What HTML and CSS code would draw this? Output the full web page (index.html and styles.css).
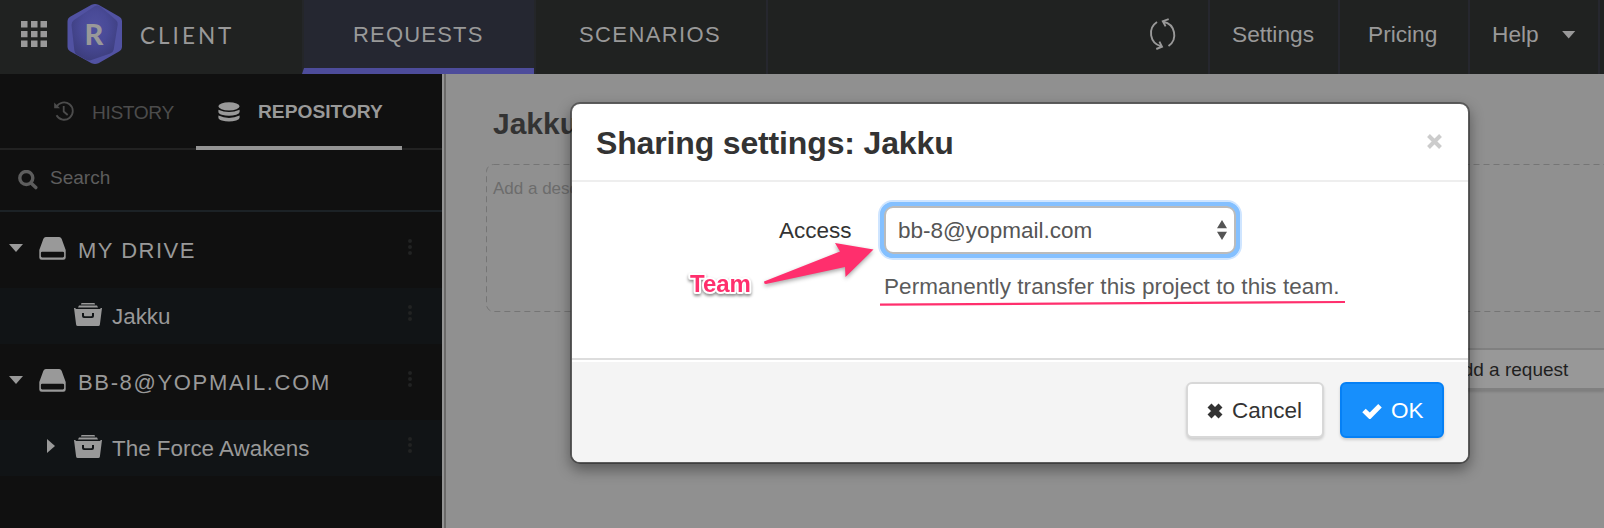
FILE: index.html
```html
<!DOCTYPE html>
<html lang="en">
<head>
<meta charset="utf-8">
<title>Sharing settings</title>
<link rel="stylesheet" href="styles.css">
</head>
<body>
<svg class="defs" width="0" height="0">
  <symbol id="drive" viewBox="0 0 27 23">
    <path fill-rule="evenodd" d="M6.8 0h13.4q1.6 0 2.4 1.7L26.700 13v7.500q0 2.300-2.300 2.300H2.600Q.3 22.800.3 20.500V13L4.400 1.700Q5.200 0 6.800 0zM3.200 14.800q-1.300 0-1.300 1.300v3q0 1.300 1.300 1.300h20.600q1.300 0 1.300-1.300v-3q0-1.300-1.300-1.300z"/>
  </symbol>
  <symbol id="box" viewBox="0 0 28 23">
    <path d="M7.500 0h13l.6 1.400H6.900zM5 2.400h18l1 2.200H4z"/>
    <path fill-rule="evenodd" d="M0 5h1l1.200 1h23.600L27 5h1L25.900 21.500q-.2 1.500-1.600 1.500H3.700q-1.400 0-1.600-1.500zM8 10v3q0 2 2 2h8q2 0 2-2v-3h-2v2.400q0 .8-.8.8h-6.400q-.8 0-.8-.8V10z"/>
  </symbol>
</svg>

<header class="topbar">
  <div class="brand">
    <svg class="apps" width="26" height="26" viewBox="0 0 26 26"><path d="M0 0h6.500v6.500H0zM10 0h6.500v6.500H10zM19.500 0H26v6.500h-6.500zM0 10h6.500v6.200H0zM10 10h6.500v6.200H10zM19.500 10H26v6.200h-6.500zM0 19.500h6.500V26H0zM10 19.500h6.500V26H10zM19.500 19.500H26V26h-6.500z"/></svg>
    <svg class="logo" width="56" height="60" viewBox="0 0 56 60">
      <defs><radialGradient id="glow" cx=".5" cy=".4" r=".65"><stop offset="0" stop-color="#50519f"/><stop offset=".45" stop-color="#494a97"/><stop offset="1" stop-color="#3b3c7a"/></radialGradient></defs>
      <path fill="#5152a2" d="M24.500.8q3.500-1.600 7 0L52 12.500q3 1.700 3 5v25q0 3.300-3 5L31.500 59.200q-3.500 1.600-7 0L3.500 47.500q-3-1.700-3-5v-25q0-3.300 3-5z"/>
      <path fill="url(#glow)" d="M28 2q3.500-1.500 6 1l15 13q2 1.600 1.700 4.500l-4 25q-.5 3-3.500 4L23 56.500q-3 0-5.500-1.500l-8-4.500q-1.800-1.500-2.200-4.500L4.500 21q-.3-3 2.500-5z"/>
      <text x="17.600" y="40.600" class="logo-letter">R</text>
    </svg>
    <span class="brand-name">CLIENT</span>
  </div>
  <nav class="main-nav">
    <a class="nav-tab active">REQUESTS</a>
    <a class="nav-tab scenarios">SCENARIOS</a>
  </nav>
  <div class="tools">
    <a class="sync"><svg width="30" height="34" viewBox="0 0 30 34"><path d="M9 5A13.500 13.500 0 0 0 13 29.300M20.500 29A13.500 13.500 0 0 0 15.500 4.700M20.700 2.200L14.800 4.200L17.600 9.400M8.300 32L14 29.700L11.400 24.600"/></svg></a>
    <a class="tool">Settings</a>
    <a class="tool">Pricing</a>
    <a class="tool help">Help <i class="caret"></i></a>
  </div>
</header>

<div class="workspace">
  <aside class="sidebar">
    <div class="side-tabs">
      <a class="side-tab history"><svg width="20" height="20" viewBox="0 0 20 20"><path class="line" d="M2.400 6A8.700 8.700 0 1 1 2.500 14.300M9.700 5v5.500l4 3.500"/><path d="M.2 1.500V7.200H6z"/></svg><span>HISTORY</span></a>
      <a class="side-tab repository"><svg width="22" height="20" viewBox="0 0 22 20"><ellipse cx="11" cy="4.300" rx="10.600" ry="4.100"/><path d="M.4 7.700q10.600 4.800 21.200 0v2.300q0 1.700-3.400 2.700q-7.200 2-14.400 0Q.4 11.700.4 10zM.4 13.500q10.600 4.800 21.200 0v2.300q0 1.700-3.400 2.700q-7.200 2-14.400 0q-3.400-1-3.400-2.700z"/></svg><span>REPOSITORY</span></a>
    </div>
    <div class="search">
      <svg width="20" height="20" viewBox="0 0 20 20"><circle cx="8.300" cy="8" r="6.500"/><path d="M13 13l4.800 4.600"/></svg>
      <span>Search</span>
    </div>
    <div class="tree">
      <div class="row drive"><i class="caret"></i><svg class="drive-icon" width="27" height="23"><use href="#drive"/></svg><span class="label">MY DRIVE</span><i class="dots"></i></div>
      <div class="row project"><i class="spacer"></i><svg class="box-icon" width="28" height="23"><use href="#box"/></svg><span class="label">Jakku</span><i class="dots"></i></div>
      <div class="row drive"><i class="caret"></i><svg class="drive-icon" width="27" height="23"><use href="#drive"/></svg><span class="label team">BB-8@YOPMAIL.COM</span><i class="dots"></i></div>
      <div class="row project"><i class="caret-right"></i><svg class="box-icon" width="28" height="23"><use href="#box"/></svg><span class="label">The Force Awakens</span><i class="dots"></i></div>
    </div>
  </aside>
  <main class="content">
    <h1 class="project-title">Jakku</h1>
    <div class="description">
      <svg class="dashes" width="1118" height="148"><rect x=".5" y=".5" width="1190" height="147" rx="7"/></svg>
      <span>Add a description</span>
    </div>
    <div class="actions"><a class="add-request">Add a request</a></div>
  </main>
</div>

<section class="modal">
  <div class="modal-header">
    <h2>Sharing settings: Jakku</h2>
    <svg width="15" height="15" viewBox="0 0 15 15"><path d="M1.500 1.500l12 12M13.500 1.500l-12 12"/></svg>
  </div>
  <div class="modal-body">
    <label class="access">Access</label>
    <div class="field">
      <div class="select"><span>bb-8@yopmail.com</span><svg width="10" height="20" viewBox="0 0 10 20"><path d="M5 0l5 8.300H0zM0 11.700h10L5 20z"/></svg></div>
      <p class="hint">Permanently transfer this project to this team.</p>
    </div>
  </div>
  <div class="modal-footer">
    <a class="btn cancel"><svg width="16" height="16" viewBox="0 0 16 16"><path d="M2.500 2.500l11 11M13.500 2.500l-11 11"/></svg>Cancel</a>
    <a class="btn ok"><svg width="20" height="16" viewBox="0 0 20 16"><path d="M2 7.500l5.800 5.600L18 2.700"/></svg>OK</a>
  </div>
  <svg class="annotation" width="896" height="358" viewBox="572 104 896 358">
    <path class="arrow" d="M764 281.500L840 251.500L835 243L873.500 249.500L845.500 277L845 267L766 284Q764 284.300 764 281.500z"/>
    <path class="underline" d="M880 304.700Q1110 303.800 1345 302"/>
    <text class="callout" x="690" y="292">Team</text>
  </svg>
</section>
</body>
</html>
```
FILE: styles.css
```css
* { box-sizing: border-box; }
body {
  margin: 0;
  width: 1604px;
  height: 528px;
  overflow: hidden;
  position: relative;
  display: flex;
  flex-direction: column;
  background: #909090;
  font-family: "Liberation Sans", Arial, sans-serif;
  font-size: 22px;
  color: #999;
}
.defs { position: absolute; }
svg { flex: none; display: block; fill: currentColor; }
h1, h2, p { margin: 0; }

.topbar { display: flex; flex: none; height: 74px; background: #202221; }
.brand { display: flex; width: 302px; padding-left: 21px; }
.apps { margin-top: 21px; }
.logo { margin: 4px 0 0 20px; }
.logo-letter { font: 900 29px Lato, sans-serif; fill: #999; }
.brand-name { margin-left: 17px; font-family: Lato, sans-serif; font-size: 22.500px; letter-spacing: 3px; line-height: 71px; }
.main-nav { display: flex; }
.nav-tab { width: 232px; padding-left: 49px; line-height: 69px; letter-spacing: 1.200px; border-left: 2px solid #242629; }
.nav-tab.active { background: #252731; border-bottom: 6px solid #4d4c9b; }
.nav-tab.scenarios { width: 234px; padding-left: 43px; letter-spacing: 1.400px; border-right: 2px solid #26272e; }
.tools { display: flex; margin-left: auto; padding-right: 4px; }
.sync { margin-right: 30px; padding-top: 17px; }
.sync svg { fill: none; stroke: #999; stroke-width: 1.900; }
.tool { width: 130px; padding-left: 22px; border-left: 2px solid #26272e; line-height: 69px; font-size: 22.700px; }
.tool:nth-child(3) { padding-left: 28px; }
.help { display: flex; align-items: center; width: 132px; padding-bottom: 5px; border-right: 2px solid #26272e; }
.help .caret { margin-left: 23px; }
.caret { width: 14px; height: 8px; background: #999; clip-path: polygon(0 0, 100% 0, 50% 100%); }

.workspace { display: flex; flex: 1; }
.sidebar { flex: none; width: 446px; background: #101010; border-right: 2px solid #6b6a69; box-shadow: inset -2px 0 #949494; }
.side-tabs { display: flex; width: 442px; height: 76px; border-bottom: 2px solid #222; font-size: 19.200px; }
.side-tab { display: flex; height: 76px; align-items: center; padding-bottom: 2px; }
.side-tab span { padding-top: 3px; }
.history { width: 196px; padding-left: 54px; gap: 18px; color: #4c4c4c; letter-spacing: -.400px; }
.history .line { fill: none; stroke: #4c4c4c; stroke-width: 1.800; }
.repository { width: 206px; padding-left: 22px; gap: 18px; font-weight: bold; letter-spacing: 0; border-bottom: 4px solid #949494; padding-bottom: 0; }
.repository svg { margin-top: 3px; }
.repository span { padding-top: 4px; }
.search { display: flex; width: 442px; height: 62px; border-bottom: 2px solid #1c2226; padding-left: 18px; gap: 12px; font-size: 19px; line-height: 55px; color: #5d5d5d; }
.search svg { margin-top: 20px; fill: none; stroke: #5d5d5d; stroke-width: 3.400; stroke-linecap: round; }
.tree { width: 442px; }
.row { display: flex; align-items: center; position: relative; }
.row.drive { height: 76px; padding-left: 9px; }
.row.project { height: 56px; padding-left: 47px; background: #111416; }
.row.drive .caret { margin-bottom: 4px; }
.drive-icon { margin: 0 12px 3px 16px; }
.row .label { padding-top: 1px; font-size: 22.400px; }
.row.drive .label { padding-top: 1px; font-size: 22px; letter-spacing: 1.500px; }
.row.drive .label.team { letter-spacing: 1.650px; }
.spacer { width: 8px; }
.caret-right { width: 8px; height: 14px; background: #999; clip-path: polygon(0 0, 100% 50%, 0 100%); margin-bottom: 4px; }
.box-icon { margin: 0 10px 4px 19px; }
.dots { width: 4px; height: 4px; margin: 0 30px 18px auto; border-radius: 2px; background: #222323; box-shadow: 0 6px #222323, 0 12px #222323; }

.content { flex: none; width: 1158px; padding: 31px 0 0 40px; color: #333; }
.project-title { padding-left: 7px; font-size: 30px; line-height: 38px; }
.description { position: relative; height: 148px; margin-top: 21px; padding: 15px 7px; font-size: 17px; line-height: 20px; color: #6c6c6c; }
.dashes { position: absolute; left: 0; top: 0; fill: none; stroke: #757575; stroke-dasharray: 6 4; }
.actions { display: flex; justify-content: flex-end; margin-top: 36px; }
.add-request { width: 220px; height: 42px; padding-left: 64px; border: 2px solid #808080; border-right: 0; background: #989898; box-shadow: 0 2px 2px rgba(0,0,0,.13); font-size: 19px; line-height: 40px; color: #1f1f1f; }

.modal {
  position: absolute;
  left: 570px;
  top: 102px;
  width: 900px;
  height: 362px;
  border: 2px solid rgba(0,0,0,.35);
  border-radius: 10px;
  background: #fff;
  background-clip: padding-box;
  box-shadow: 0 6px 14px rgba(0,0,0,.38);
  color: #333;
}
.modal-header { display: flex; justify-content: space-between; height: 78px; padding: 0 26px 0 24px; border-bottom: 2px solid #eee; }
.modal-header h2 { font-size: 32px; line-height: 78px; letter-spacing: -.150px; }
.modal-header svg { margin-top: 30px; fill: none; stroke: #ccc; stroke-width: 4; }
.modal-body { display: flex; height: 176px; font-size: 22.500px; }
.access { width: 312px; padding-left: 207px; line-height: 97px; }
.select { display: flex; justify-content: space-between; align-items: center; width: 352px; height: 48px; margin-top: 24px; padding: 2px 7px 0 12px; border: 2px solid #bbb; border-radius: 9px; background: #fff; outline: 4px solid #84c0ff; box-shadow: 0 0 0 4px #84c0ff, 0 0 0 6px #cfe5ff; color: #555; }
.select svg { margin-bottom: 2px; }
.hint { margin-top: 18px; line-height: 30px; color: #5b5b5b; white-space: nowrap; letter-spacing: .06px; }
.modal-footer { display: flex; justify-content: flex-end; gap: 16px; height: 104px; padding: 22px 24px; border-top: 2px solid #ddd; box-shadow: inset 0 2px #fff; background: #f4f4f4; border-radius: 0 0 8px 8px; }
.btn { display: flex; align-items: center; height: 56px; border: 2px solid #d8d8d8; border-radius: 6px; box-shadow: 0 2px 3px rgba(0,0,0,.16); font-size: 22.500px; padding-top: 1px; }
.btn svg { fill: none; stroke: currentColor; }
.cancel { width: 138px; padding-left: 19px; gap: 9px; background: #fff; }
.cancel svg { stroke-width: 5.600; }
.ok { width: 104px; padding-left: 20px; gap: 9px; background: #178ffc; border-color: #0580f5; color: #fff; }
.ok svg { stroke-width: 5; }
.annotation { position: absolute; left: 0; top: 0; }
.arrow { fill: #ff2f6d; filter: drop-shadow(0 2px 2px rgba(0,0,0,.35)); }
.underline { fill: none; stroke: #ff2f6d; stroke-width: 2.200; }
.callout { font-size: 24px; font-weight: bold; fill: #ff2f6d; stroke: #fff; stroke-width: 4px; stroke-linejoin: round; paint-order: stroke; filter: drop-shadow(0 2px 1.500px rgba(0,0,0,.45)); }
```
